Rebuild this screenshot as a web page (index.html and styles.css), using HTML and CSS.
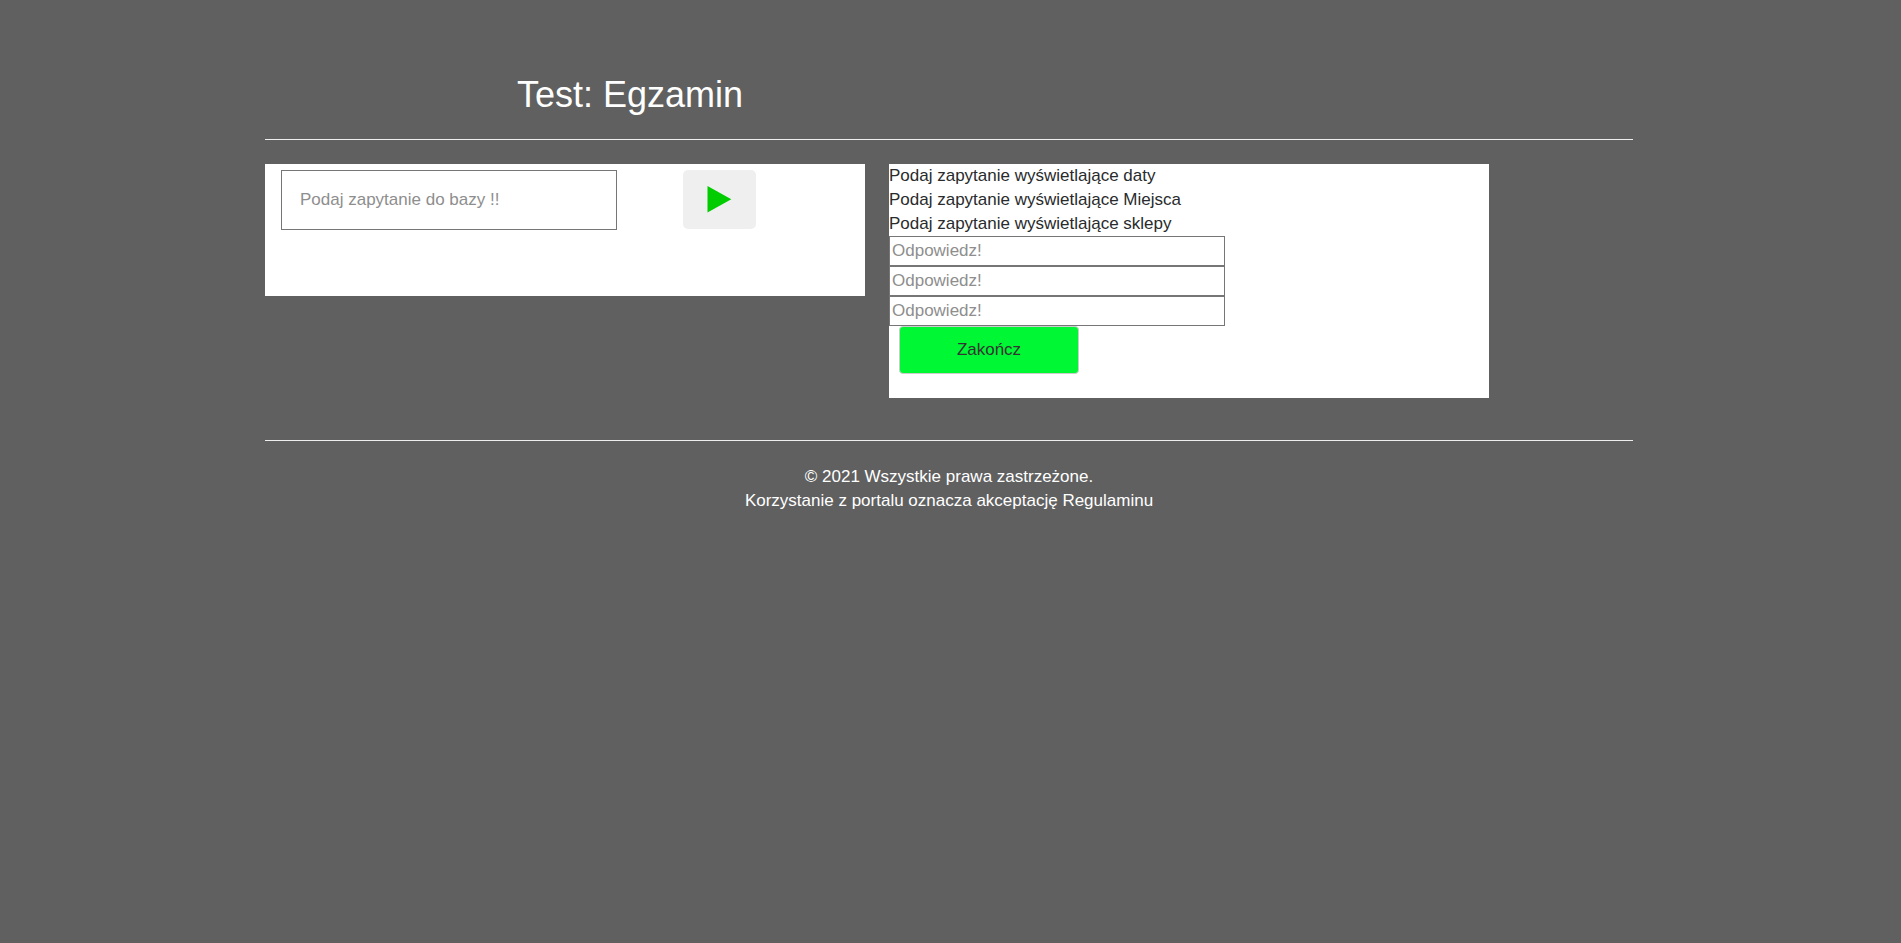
FILE: index.html
```html
<!DOCTYPE html>
<html lang="pl">
<head>
<meta charset="utf-8">
<meta name="viewport" content="width=device-width, initial-scale=1">
<title>Test: Egzamin</title>
<link rel="stylesheet" href="styles.css">
</head>
<body>
<div class="container">
  <header class="header">
    <h1 class="title">Test: Egzamin</h1>
  </header>
  <main class="panels">
    <form class="panel query">
      <input class="query-input" type="text" placeholder="Podaj zapytanie do bazy !!" aria-label="Zapytanie do bazy">
      <button class="run" type="button" aria-label="Uruchom">
        <svg class="run-icon" viewBox="0 0 26 28" aria-hidden="true"><path d="M0.5 0L24.3 13.2L0.5 26.4Z"/></svg>
      </button>
    </form>
    <form class="panel">
      <label class="task" for="a1">Podaj zapytanie wyświetlające daty</label>
      <label class="task" for="a2">Podaj zapytanie wyświetlające Miejsca</label>
      <label class="task" for="a3">Podaj zapytanie wyświetlające sklepy</label>
      <input class="answer" id="a1" type="text" placeholder="Odpowiedz!">
      <input class="answer" id="a2" type="text" placeholder="Odpowiedz!">
      <input class="answer" id="a3" type="text" placeholder="Odpowiedz!">
      <button class="finish" type="button">Zakończ</button>
    </form>
  </main>
  <footer class="footer">
    <p class="note">© 2021 Wszystkie prawa zastrzeżone.</p>
    <p class="note">Korzystanie z portalu oznacza akceptację Regulaminu</p>
  </footer>
</div>
</body>
</html>
```
FILE: styles.css
```css
* {
  box-sizing: border-box;
}

body {
  margin: 0;
  padding-right: 3px;
  background: #606060;
  color: #292b2c;
  font-family: "Liberation Sans", Arial, sans-serif;
  font-size: 17px;
  line-height: 24px;
}

.container {
  max-width: 1368px;
  margin: 0 auto;
}

.header {
  padding: 73px 0 22px 252px;
  border-bottom: 1px solid #eeeeee;
}

.title {
  margin: 0;
  color: #ffffff;
  font-size: 36px;
  font-weight: 400;
  line-height: 44px;
}

.panels {
  display: flex;
  flex-wrap: wrap;
  align-items: flex-start;
  gap: 24px;
  padding: 24px 0 42px;
}

.panel {
  width: 600px;
  max-width: 100%;
  padding-bottom: 24px;
  background: #ffffff;
}

.query {
  display: flex;
  align-items: flex-start;
  gap: 66px;
  padding: 6px 16px 66px;
}

input,
button {
  font: inherit;
}

input {
  width: 336px;
  max-width: 100%;
  border: 1px solid #767676;
  border-radius: 0;
  background: #ffffff;
}

input::placeholder {
  color: #8e8e8e;
  opacity: 1;
}

.query-input {
  height: 60px;
  padding: 0 18px;
}

.run {
  display: flex;
  align-items: center;
  justify-content: center;
  width: 73px;
  height: 59px;
  padding: 0;
  border: 0;
  border-radius: 5px;
  background: #efefef;
}

.run-icon {
  width: 26px;
  height: 28px;
  fill: #00cc00;
}

.task {
  display: block;
}

.answer {
  display: block;
  height: 30px;
  padding: 0 2px;
}

.finish {
  display: block;
  width: 180px;
  height: 48px;
  margin-left: 10px;
  padding: 0;
  border: 1px solid #cccccc;
  border-radius: 4px;
  background: #00f733;
  color: #333333;
}

.footer {
  padding-top: 24px;
  border-top: 1px solid #eeeeee;
  color: #ffffff;
  text-align: center;
}

.note {
  margin: 0;
}
```
